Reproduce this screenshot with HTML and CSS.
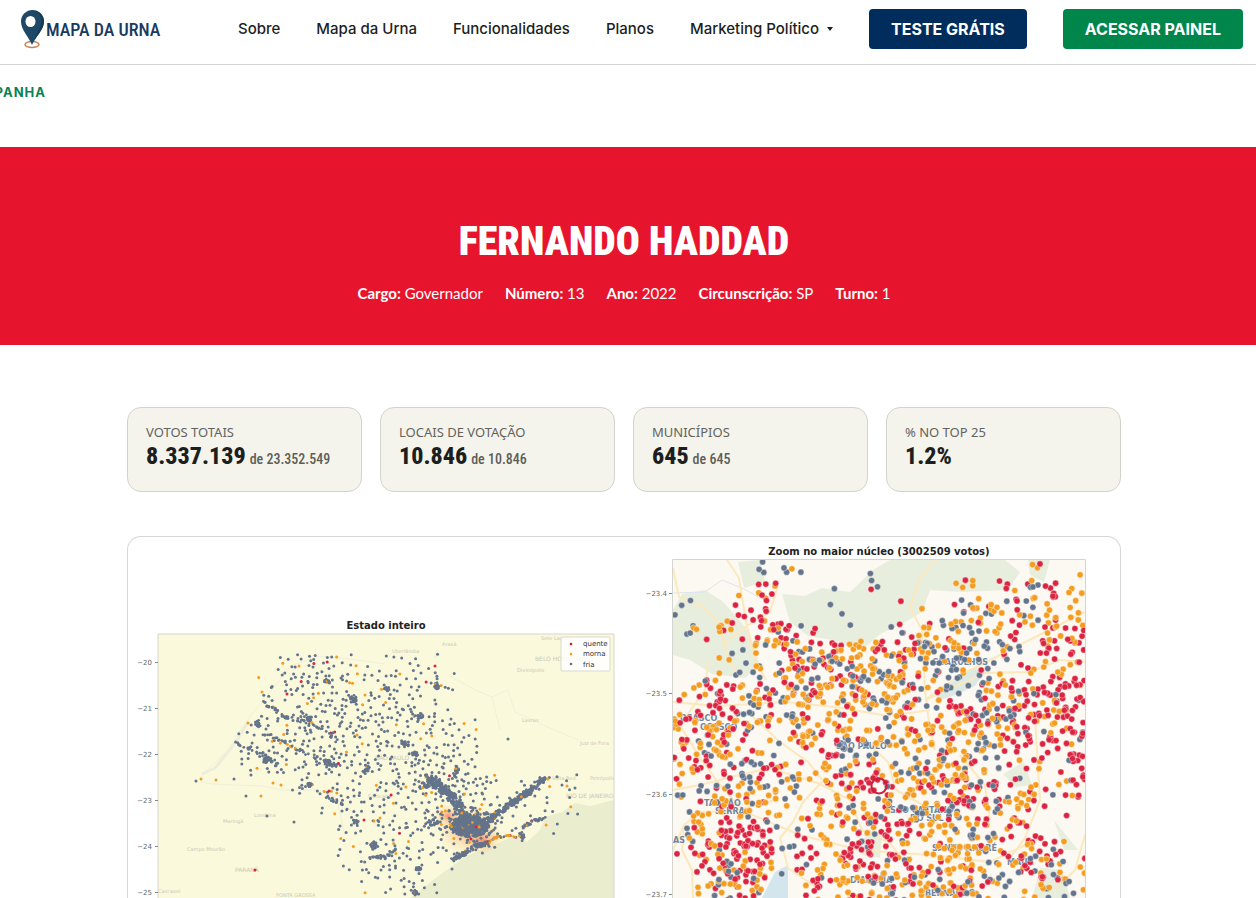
FILE: index.html
```
<!doctype html>
<html lang="pt-BR">
  <head>
    <meta charset="UTF-8" />
    <meta name="viewport" content="width=device-width, initial-scale=1.0" />
    <title>Fernando Haddad - Mapa da Urna</title>
    <link rel="stylesheet" href="styles.css">
  </head>
  <body>
    <header class="site-header">
      <a class="logo" href="#">
        <svg class="logo-pin" viewBox="0 0 26 40" aria-hidden="true">
          <ellipse cx="12" cy="35.500" rx="7" ry="3" fill="none" stroke="#c98256" stroke-width="1.500" />
          <path d="M12 36C9 28 1 21 1 12.500a11.500 11.500 0 0 1 23 0C24 21 15 28 12 36Z" fill="#1d4966" />
          <path d="M15 2c8 3 8 13 3 20l-6 14c3-8 12-15 12-23.500C24 7 20 2.500 15 2Z" fill="#163a54" />
          <ellipse cx="10.500" cy="12.500" rx="5" ry="5.500" fill="#fff" />
        </svg>
        <span class="logo-text">MAPA DA URNA</span>
      </a>
      <nav class="nav">
        <a href="#">Sobre</a>
        <a href="#">Mapa da Urna</a>
        <a href="#">Funcionalidades</a>
        <a href="#">Planos</a>
        <a class="has-menu" href="#">Marketing Político</a>
        <a class="btn btn-navy" href="#">TESTE GRÁTIS</a>
        <a class="btn btn-green" href="#">ACESSAR PAINEL</a>
      </nav>
    </header>

    <div class="ticker"><span>CAMPANHA</span></div>

    <section class="hero">
      <h1>FERNANDO HADDAD</h1>
      <ul class="meta">
        <li><strong>Cargo:</strong> Governador</li>
        <li><strong>Número:</strong> 13</li>
        <li><strong>Ano:</strong> 2022</li>
        <li><strong>Circunscrição:</strong> SP</li>
        <li><strong>Turno:</strong> 1</li>
      </ul>
    </section>

    <main class="content">
      <div class="stats">
        <div class="stat">
          <div class="stat-label">VOTOS TOTAIS</div>
          <div class="stat-value">8.337.139 <small>de 23.352.549</small></div>
        </div>
        <div class="stat">
          <div class="stat-label">LOCAIS DE VOTAÇÃO</div>
          <div class="stat-value">10.846 <small>de 10.846</small></div>
        </div>
        <div class="stat">
          <div class="stat-label">MUNICÍPIOS</div>
          <div class="stat-value">645 <small>de 645</small></div>
        </div>
        <div class="stat">
          <div class="stat-label">% NO TOP 25</div>
          <div class="stat-value">1.2%</div>
        </div>
      </div>

      <figure class="map-card">
        <svg class="maps" viewBox="128 537 992 361" role="img" aria-label="Mapas de votação">
          <defs>
            <clipPath id="clipState"><rect x="158" y="634" width="456" height="264" /></clipPath>
            <clipPath id="clipZoom"><rect x="673" y="560" width="412" height="338" /></clipPath>
            <radialGradient id="heat">
              <stop offset="0" stop-color="#f2502f" stop-opacity=".6" />
              <stop offset=".4" stop-color="#f9a662" stop-opacity=".4" />
              <stop offset="1" stop-color="#fbe3a0" stop-opacity="0" />
            </radialGradient>
          </defs>

          <!-- whole state -->
          <text class="map-title" x="386" y="629">Estado inteiro</text>
          <g clip-path="url(#clipState)">
            <rect x="158" y="634" width="456" height="264" fill="#fbf9dc" />
            <path d="M614 800L590 806L575 803L562 812L545 817L540 830L527 842L516 835L487 848L466 856L437 877L410 898H614Z" fill="#ebedcf" />
            <path class="border" d="M201 777C215 760 228 755 237 735L252 714L268 695L290 666L320 656L350 659L385 664M201 782C230 788 260 782 280 790C310 792 325 785 337 800L345 835M450 676L475 690L492 697L508 690L515 712M492 697L500 730M515 712L550 728L578 740" />
            <path d="M202 774L215 768L236 742L248 722" fill="none" stroke="#eeeed8" stroke-width="3" />
            <g class="place">
              <text x="392" y="653">Uberlândia</text>
              <text x="442" y="646">Araxá</text>
              <text x="541" y="640">Sete Lagoas</text>
              <text class="place-lg" x="535" y="661">BELO HORIZONTE</text>
              <text x="517" y="672">Divinópolis</text>
              <text x="522" y="722">Lavras</text>
              <text x="580" y="745">Juiz de Fora</text>
              <text x="552" y="780">Volta Red.</text>
              <text x="590" y="780">Petrópolis</text>
              <text class="place-lg" x="566" y="798">RIO DE JANEIRO</text>
              <text class="place-lg" x="375" y="760">SÃO PAULO</text>
              <text x="254" y="817">Londrina</text>
              <text x="223" y="823">Maringá</text>
              <text x="187" y="851">Campo Mourão</text>
              <text class="place-lg" x="235" y="872">PARANÁ</text>
              <text x="158" y="893">Cascavel</text>
              <text x="276" y="897">PONTA GROSSA</text>
              <text x="368" y="798">Sorocaba</text>
            </g>
            <ellipse cx="468" cy="830" rx="35" ry="27" fill="url(#heat)" />
            <ellipse cx="482" cy="840" rx="22" ry="15" fill="url(#heat)" />
            <ellipse cx="448" cy="816" rx="16" ry="12" fill="url(#heat)" />
            <g id="stateDots"></g>
          </g>
          <path class="frame" d="M158 898V634H614V898" />
          <g class="tick">
            <text x="152" y="665">−20</text>
            <text x="152" y="711">−21</text>
            <text x="152" y="757">−22</text>
            <text x="152" y="803">−23</text>
            <text x="152" y="849">−24</text>
            <text x="152" y="895">−25</text>
          </g>
          <path class="tick-mark" d="M155 662.500h3M155 708.500h3M155 754.500h3M155 800.500h3M155 846.500h3M155 892.500h3" />
          <rect x="561" y="637" width="49" height="34" rx="1" fill="#fff" fill-opacity=".85" stroke="#d9d9cf" />
          <g class="legend">
            <circle cx="571" cy="644" r="1.300" fill="#dc143c" /><text x="583" y="646">quente</text>
            <circle cx="571" cy="654" r="1.300" fill="#f39c12" /><text x="583" y="656">morna</text>
            <circle cx="571" cy="664" r="1.300" fill="#64748b" /><text x="583" y="667">fria</text>
          </g>

          <!-- largest cluster -->
          <text class="map-title" x="879" y="555">Zoom no maior núcleo (3002509 votos)</text>
          <g clip-path="url(#clipZoom)">
            <rect x="673" y="560" width="412" height="338" fill="#fcf8f2" />
            <g fill="#e8eede">
              <path d="M682 594L705 590L722 601L738 618L750 634L760 665L745 678L712 674L690 660L673 655V610Z" />
              <path d="M782 594L805 596L822 588L850 592L873 570L890 560H1005L1020 572L1008 590L962 592L930 590L922 612L900 625L880 634L862 650L832 640L808 636L790 622Z" />
              <path d="M1003 774L1024 762L1032 785L1016 787Z" />
              <path d="M1028 560H1050L1044 582L1030 575Z" />
              <path d="M738 562L760 560L765 582L744 588Z" />
              <path d="M866 828L882 835L880 858L862 855ZM1054 820L1062 830L1078 850L1064 850ZM1040 868L1062 870L1070 898H1032Z" />
            </g>
            <path d="M940 690L974 668L986 670L975 686L958 694L935 702Z" fill="#dce9e4" />
            <path d="M775 872L788 865V898H762Z" fill="#d3e5ed" />
            <path d="M673 593L705 592L722 580L744 589L760 598" fill="none" stroke="#dde4ee" stroke-width="1" />
            <g class="road">
              <path d="M673 568L679 597L700 605L722 625L724 645L734 668L739 674M727 560L739 578L746 622L755 660L766 680M722 645L748 625L770 612L778 585" />
              <path d="M936 560L920 578L910 608L922 630L925 690L930 730L935 750M925 700L960 675L1000 655L1045 632L1085 612M925 700L985 673L1030 672L1060 660L1085 662" />
              <path d="M673 702L715 706L785 702L835 707L888 716L930 710M708 662L705 690L680 725L700 758L724 790L745 812L800 835L860 850L930 855L990 862L1040 838" />
              <path d="M752 716L780 742L808 762L823 781L803 802L793 822L780 838L788 868L820 890M673 790L700 785L735 776L770 768L820 784" />
              <path d="M673 850L684 825L700 812L735 811L775 800M684 826L682 850L692 870L693 898M820 784L850 800L862 830L890 843L912 872L926 898" />
              <path d="M870 745L888 762L896 790L925 806L945 835L960 858M1035 718L1040 800L1025 838L1010 858M960 755L985 785L990 820M1085 835L1075 870L1055 890" />
            </g>
            <g class="city">
              <text x="680" y="721">OSASCO</text>
              <text x="700" y="730">OSASCO</text>
              <text x="932" y="665">GUARULHOS</text>
              <text x="836" y="749">SÃO PAULO</text>
              <text x="704" y="806">TABOÃO</text>
              <text x="715" y="814">SERRA</text>
              <text x="890" y="813">SÃO CAETANO</text>
              <text x="910" y="821">DO SUL</text>
              <text x="932" y="851">SANTO ANDRÉ</text>
              <text x="1007" y="865">MAUÁ</text>
              <text x="673" y="843">AS</text>
              <text x="850" y="883">DIADEMA</text>
              <text x="925" y="896">BERNARDO</text>
            </g>
            <g id="zoomDots" stroke="#fff" stroke-opacity=".8" stroke-width=".5"></g>
            <circle cx="879" cy="786" r="7.500" fill="none" stroke="#c8203c" stroke-width="2" />
          </g>
          <path class="frame" d="M672.500 898V559.500H1085.500V898" />
          <g class="tick">
            <text x="667" y="596">−23.4</text>
            <text x="667" y="696">−23.5</text>
            <text x="667" y="797">−23.6</text>
            <text x="667" y="897">−23.7</text>
          </g>
          <path class="tick-mark" d="M669 593.500h3M669 693.500h3M669 794.500h3M669 894.500h3" />
        </svg>
      </figure>
    </main>
    <script src="maps.js"></script>
  </body>
</html>
```
FILE: styles.css
```
* {
  box-sizing: border-box;
  margin: 0;
  padding: 0;
}

body {
  font-family: Inter, "Liberation Sans", sans-serif;
  background: #fff;
  color: #1c1f1e;
}

a {
  color: inherit;
  text-decoration: none;
}

.site-header {
  display: flex;
  align-items: center;
  justify-content: space-between;
  padding: 9px 13px 15px 20px;
  border-bottom: 1px solid #d3d5d5;
}

.logo {
  display: flex;
  align-items: center;
}

.logo-pin {
  width: 26px;
  height: 40px;
}

.logo-text {
  font-family: "Roboto Condensed", "Liberation Sans Narrow", "Liberation Sans", sans-serif;
  font-size: 18px;
  font-weight: 500;
  color: #173a5e;
  white-space: nowrap;
}

.nav {
  display: flex;
  align-items: center;
  gap: 36px;
  font-size: 15px;
  font-weight: 500;
  line-height: 20px;
  white-space: nowrap;
}

.has-menu::after {
  content: "";
  display: inline-block;
  margin-left: 8px;
  vertical-align: 3px;
  border: 3px solid transparent;
  border-top: 4px solid #1c1f1e;
  border-bottom: 0;
}

.btn {
  padding: 10px 22px;
  border-radius: 4px;
  color: #fff;
  font-size: 16px;
  font-weight: 700;
}

.btn-navy {
  background: #002d5b;
}

.btn-green {
  background: #00854a;
}

.ticker {
  display: flex;
  justify-content: flex-end;
  width: 46px;
  padding: 17px 0 45px;
  overflow: hidden;
  color: #0a8357;
  font-size: 13px;
  font-weight: 700;
  letter-spacing: 1px;
  line-height: 20px;
}

.hero {
  padding: 68px 8px 40px 0;
  background: #e6152d;
  color: #fff;
  text-align: center;
}

h1 {
  font-family: "Roboto Condensed", "Liberation Sans Narrow", "Liberation Sans", sans-serif;
  font-size: 40px;
  font-weight: 900;
  line-height: 54px;
}

.meta {
  display: flex;
  flex-wrap: wrap;
  justify-content: center;
  gap: 22px;
  margin-top: 12px;
  list-style: none;
  font-family: Lato, "Open Sans", sans-serif;
  font-size: 15px;
  line-height: 24px;
}

.content {
  padding: 62px 135px 0 127px;
}

.stats {
  display: grid;
  grid-template-columns: repeat(4, 1fr);
  gap: 18px;
}

.stat {
  padding: 16px 18px 19px;
  border: 1px solid #d2d3cb;
  border-radius: 14px;
  background: #f5f4ec;
}

.stat-label {
  font-family: "Noto Sans", sans-serif;
  font-size: 13px;
  line-height: 16px;
  color: #62635e;
  white-space: nowrap;
}

.stat-value {
  display: flex;
  align-items: baseline;
  gap: 4px;
  font-family: "Roboto Condensed", "Liberation Sans Narrow", "Liberation Sans", sans-serif;
  font-size: 24px;
  font-weight: 800;
  line-height: 32px;
  white-space: nowrap;
}

.stat-value small {
  font-size: 14px;
  font-weight: 500;
  line-height: 16px;
  color: #5d5e5a;
}

.map-card {
  margin-top: 44px;
  border: 1px solid #d6d8d6;
  border-bottom: 0;
  border-radius: 14px 14px 0 0;
  overflow: hidden;
}

.maps {
  display: block;
  width: 100%;
  font-family: "DejaVu Sans", sans-serif;
}

.map-title {
  font-size: 10px;
  font-weight: 700;
  fill: #222;
  text-anchor: middle;
}

.tick text {
  font-size: 7px;
  fill: #666;
  text-anchor: end;
}

.tick-mark {
  stroke: #888;
}

.frame {
  fill: none;
  stroke: #d5d5d0;
}

.border {
  fill: none;
  stroke: #f0efd9;
  stroke-width: 1;
}

.place {
  font-size: 5px;
  fill: #c9c8b4;
}

.place-lg {
  font-size: 6px;
}

.legend {
  font-size: 7px;
  fill: #333;
}

.road {
  fill: none;
  stroke: #fce8bd;
  stroke-width: 2;
}

.city {
  font-size: 8px;
  font-weight: 700;
  fill: #6f86a3;
}
```
FILE: maps.js
```
const COLORS = ["#dc2340", "#f39c1f", "#64748b"];

// share of quente, morna, fria
const MIX = {
  r: [0.8, 0.14, 0.06],
  o: [0.15, 0.75, 0.1],
  c: [0.04, 0.08, 0.88],
  w: [0.48, 0.45, 0.07],
  m: [0.34, 0.36, 0.3],
  k: [0.12, 0.45, 0.43],
  s: [0.01, 0.09, 0.9],
  z: [0, 0.02, 0.98],
};

let seed = 13;
function rand() {
  seed = (seed * 1664525 + 1013904223) % 4294967296;
  return seed / 4294967296;
}

function pick(mix) {
  const v = rand();
  if (v < MIX[mix][0]) return 0;
  return v < MIX[mix][0] + MIX[mix][1] ? 1 : 2;
}

function dot(group, x, y, r, color) {
  const c = document.createElementNS("http://www.w3.org/2000/svg", "circle");
  c.setAttribute("cx", x.toFixed(1));
  c.setAttribute("cy", y.toFixed(1));
  c.setAttribute("r", r);
  c.setAttribute("fill", COLORS[color]);
  group.appendChild(c);
}

// spread the points of every cell; more tries keeps them further apart
function cells(group, grid, x0, y0, w, h, r, scale, tries) {
  const points = [];
  grid.forEach(([counts, mixes], row) => {
    [...counts].forEach((n, col) => {
      const total = Math.round(n * scale);
      for (let i = 0; i < total; i++) {
        let best = null;
        let bestGap = -1;
        for (let t = 0; t < tries; t++) {
          const x = x0 + (col + rand()) * w;
          const y = y0 + (row + rand()) * h;
          let gap = 99;
          for (const p of points) gap = Math.min(gap, Math.hypot(p.x - x, p.y - y));
          if (gap > bestGap) {
            bestGap = gap;
            best = { x, y };
          }
        }
        best.color = pick(mixes.length > 1 ? mixes[col] : mixes);
        points.push(best);
      }
    });
  });
  for (let i = points.length - 1; i > 0; i--) {
    const j = Math.floor(rand() * (i + 1));
    [points[i], points[j]] = [points[j], points[i]];
  }
  points.forEach((p) => dot(group, p.x, p.y, r, p.color));
}

function blob(group, cx, cy, rx, ry, n, mix, r) {
  for (let i = 0; i < n; i++) {
    const a = rand() * Math.PI * 2;
    const d = Math.pow(rand(), 0.7);
    dot(group, cx + Math.cos(a) * d * rx, cy + Math.sin(a) * d * ry, r, pick(mix));
  }
}

function trail(group, path, n, spread, mix, r) {
  for (let i = 0; i < n; i++) {
    const t = rand() * (path.length - 1);
    const k = Math.floor(t);
    const f = t - k;
    const x = path[k][0] + (path[k + 1][0] - path[k][0]) * f;
    const y = path[k][1] + (path[k + 1][1] - path[k][1]) * f;
    dot(group, x + (rand() - 0.5) * spread, y + (rand() - 0.5) * spread, r, pick(mix));
  }
}

const state = document.getElementById("stateDots");
cells(
  state,
  [
    ["00000000000000000000000", "s"],
    ["00000069641334100000000", "s"],
    ["00000289764656300000000", "s"],
    ["00000527796973100000000", "s"],
    ["00002469679876530000000", "s"],
    ["00016775655666550000000", "s"],
    ["00004956978867950000000", "s"],
    ["00000017734686997144200", "s"],
    ["00000000566657996533300", "s"],
    ["00000000052668996423000", "s"],
    ["00000000034544632000000", "s"],
    ["00000000025834100000000", "s"],
    ["00000000003274000000000", "s"],
    ["00000000000020000000000", "s"],
  ],
  158, 634, 20, 20, 1.5, 1.25, 2
);

[
  [353, 699, 4, 4], [308, 718, 4, 4], [266, 760, 4, 4], [328, 763, 4, 3],
  [366, 769, 4, 4], [419, 716, 4, 4], [404, 744, 3, 3], [437, 686, 3, 3],
  [387, 689, 3, 2], [415, 754, 3, 3], [309, 785, 3, 2], [424, 786, 5, 4],
  [456, 772, 3, 6], [434, 823, 7, 4], [374, 845, 3, 4], [418, 869, 3, 2],
  [327, 681, 3, 2], [258, 724, 4, 4], [522, 836, 3, 5], [415, 893, 2, 2],
].forEach(([x, y, rx, ry]) => blob(state, x, y, rx, ry, 18, "z", 1.4));

blob(state, 470, 826, 19, 11, 460, "z", 1.5);
blob(state, 466, 824, 30, 19, 110, "s", 1.4);
trail(state, [[428, 778], [442, 788], [455, 800], [466, 818]], 220, 9, "z", 1.5);
trail(state, [[488, 820], [502, 810], [516, 800], [530, 791], [544, 778]], 190, 5, "z", 1.5);
trail(state, [[451, 861], [462, 855], [474, 847], [487, 843]], 110, 4, "z", 1.4);
trail(state, [[487, 843], [497, 837], [509, 836], [516, 838]], 45, 2, "k", 1.2);
trail(state, [[522, 828], [531, 822], [545, 818]], 30, 3, "z", 1.4);
trail(state, [[263, 702], [272, 708], [285, 717], [302, 721], [322, 728], [337, 741]], 50, 3, "z", 1.4);
trail(state, [[237, 744], [250, 749], [266, 756], [276, 766]], 24, 3, "z", 1.4);
trail(state, [[262, 732], [280, 741], [292, 747], [308, 754], [330, 764], [342, 765]], 45, 4, "s", 1.4);
trail(state, [[331, 799], [342, 803], [352, 818], [358, 825]], 25, 4, "z", 1.4);
trail(state, [[370, 857], [385, 857], [395, 850]], 28, 3, "z", 1.4);

// isolated polling places
[
  [196, 781, 2], [201, 779, 1], [216, 780, 1], [234, 779, 2], [246, 796, 2],
  [251, 775, 2], [261, 796, 1], [267, 816, 2], [294, 822, 2], [255, 870, 0],
  [508, 739, 2], [287, 694, 0], [435, 666, 0], [329, 791, 0], [364, 820, 0],
  [374, 821, 1], [380, 818, 1], [471, 839, 0], [548, 779, 1], [562, 785, 2],
  [567, 786, 1], [575, 788, 2], [273, 783, 1], [281, 785, 1], [248, 723, 1],
  [262, 692, 1], [357, 735, 1],
].forEach(([x, y, c]) => dot(state, x, y, 1.5, c));

cells(
  document.getElementById("zoomDots"),
  [
    ["00002210010000000201", "mmmmcccccccccccccrco"],
    ["00016001020001413552", "cccowcccccccccwrrmro"],
    ["20043001100111663344", "cccrwccccccrorkkmmoo"],
    ["22615820101447644275", "comwwrrccccrkkkorowr"],
    ["00216688787899846255", "ccocommrwowwkkkcmorr"],
    ["00134799887855331253", "ccocommmmokwkckkmowr"],
    ["16748697989843377688", "orrowomoowokkckmmrrr"],
    ["43755554567736799898", "wrrcmkoomkkmkwmmmrrr"],
    ["68954474734568877677", "mowmokorwookooomrrmm"],
    ["67933146852548774436", "rmorokorckmkokmkrrrr"],
    ["45465544763788743215", "orrcrmoomromoowoworr"],
    ["32566414675679863526", "kcwookoowrwowmmrwoow"],
    ["14654235557579786211", "comoowwomommkmwmowrr"],
    ["25787143466665755200", "corrrmmomwrrookwwrcc"],
    ["27898242885445633861", "rrwrrcworrrowookrwmc"],
    ["04997135887665664882", "rrmrwckowrmroookmrmo"],
    ["03873043788677842424", "oomrocrromkmokkwcmmc"],
  ],
  673, 560, 20.6, 20, 3.1, 1.3, 1
);
```
